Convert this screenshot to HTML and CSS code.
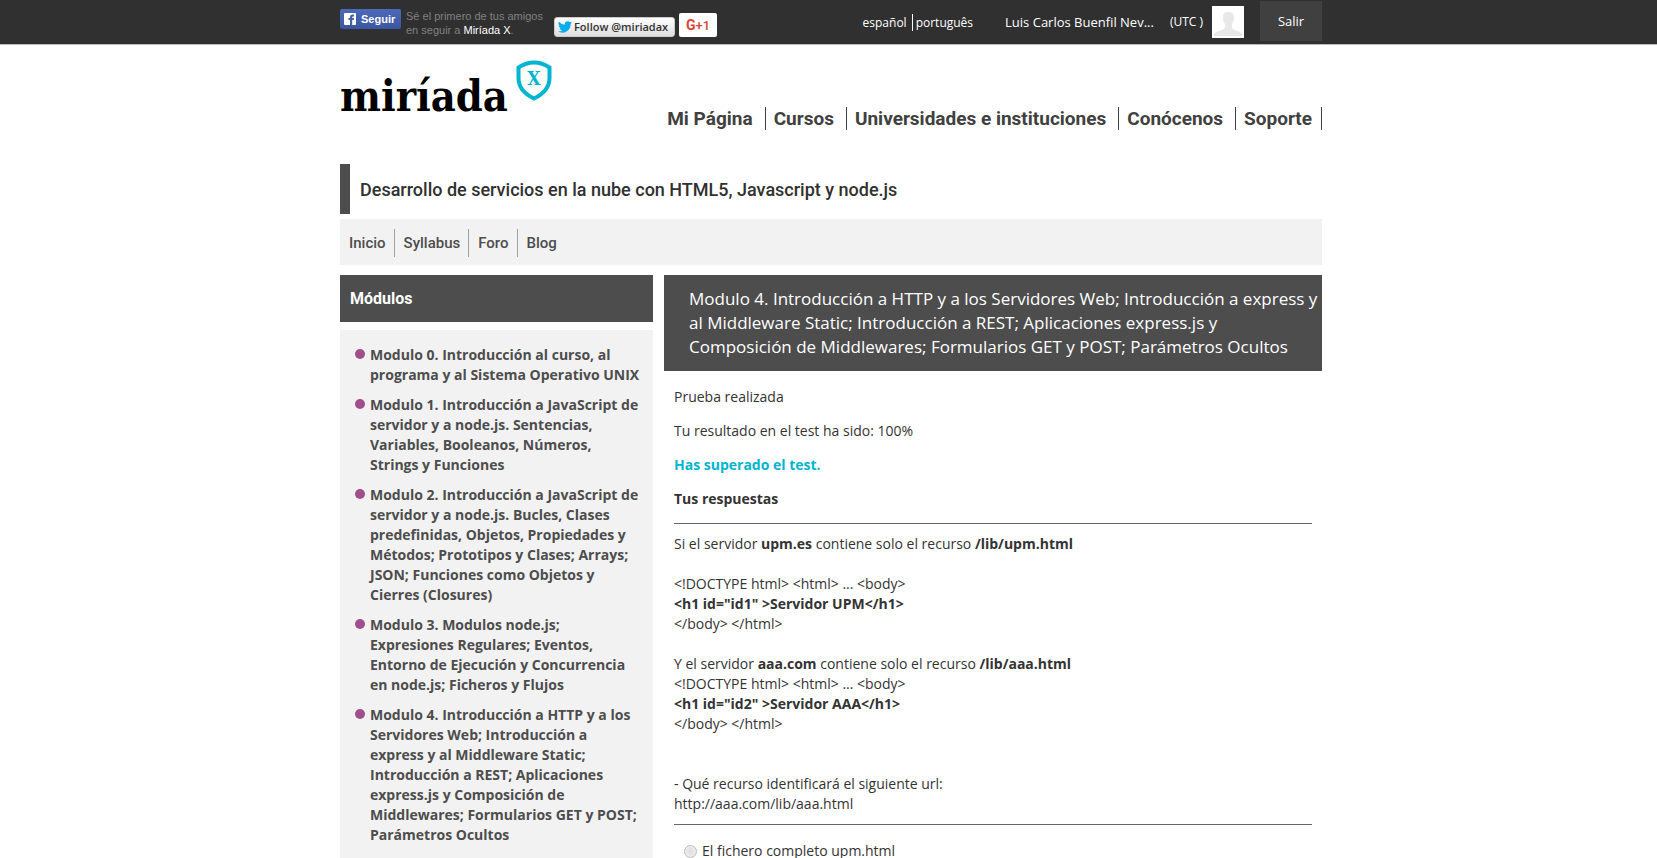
FILE: index.html
```html
<!DOCTYPE html>
<html lang="es">
<head>
<meta charset="utf-8">
<title>Miríada X</title>
<link rel="stylesheet" href="styles.css">
</head>
<body>
<div class="topbar">
  <div class="wrap topbar-inner">
    <div class="fb">
      <button class="fb-button" type="button">
        <svg class="fb-icon" viewBox="0 0 12 12" aria-hidden="true"><rect width="12" height="12" rx="1" fill="#fff"/><path d="M6 12V7H4.500V5H6V4Q6 1.500 8.500 1.500H10V3.500H9Q8.200 3.500 8.200 4.300V5H10L9.700 7H8.200V12Z" fill="#4560ad"/></svg>
        Seguir
      </button>
      <p class="fb-text">Sé el primero de tus amigos<br>en seguir a <a href="#">Miríada X</a>.</p>
    </div>
    <button class="tw-button" type="button">
      <svg class="tw-icon" viewBox="0 0 24 20" aria-hidden="true"><path d="M24 2.400a10 10 0 0 1-2.800.8A5 5 0 0 0 23.300.5a10 10 0 0 1-3.100 1.200 4.900 4.900 0 0 0-8.400 4.500A14 14 0 0 1 1.700 1a4.900 4.900 0 0 0 1.500 6.600 5 5 0 0 1-2.200-.6 4.900 4.900 0 0 0 3.900 4.900 5 5 0 0 1-2.200.1 4.900 4.900 0 0 0 4.600 3.400A9.900 9.900 0 0 1 0 17.400 14 14 0 0 0 21.500 5 10 10 0 0 0 24 2.400Z" fill="#00aced"/></svg>
      Follow @miriadax
    </button>
    <button class="gp-button" type="button"><span class="gp-g">G</span>+1</button>
    <nav class="langs" aria-label="Idioma">
      <a href="#">español</a>
      <a href="#">português</a>
    </nav>
    <a class="user" href="#">Luis Carlos Buenfil Nev...</a>
    <span class="utc">(UTC )</span>
    <svg class="avatar" viewBox="0 0 32 32" aria-hidden="true"><rect width="32" height="32" fill="#fff"/><path d="M2 30V28Q3 26 10 24Q13 23 13 21V18Q11 16 11 11Q11 6 16 6Q22 6 22 11Q22 16 20 18V21Q20 23 23 24Q29 26 30 28V30Z" fill="#e8e8e8"/></svg>
    <a class="logout" href="#">Salir</a>
  </div>
</div>

<header class="wrap header">
  <a class="logo" href="#">
    <span class="logo-text">miríada</span>
    <svg class="shield" viewBox="0 0 36 42" aria-hidden="true"><path d="M2.500 7.500Q10 2.500 18 2.500Q26 2.500 33.500 7.500V18Q33.500 31 18 38.500Q2.500 31 2.500 18Z" fill="none" stroke="#00b5d0" stroke-width="4"/><text x="18" y="25" text-anchor="middle" class="shield-x">X</text></svg>
  </a>
  <nav class="main-nav">
    <a href="#">Mi Página</a>
    <a href="#">Cursos</a>
    <a href="#">Universidades e instituciones</a>
    <a href="#">Conócenos</a>
    <a href="#">Soporte</a>
  </nav>
</header>

<main class="wrap">
  <h1 class="course-title">Desarrollo de servicios en la nube con HTML5, Javascript y node.js</h1>
  <nav class="course-nav">
    <a href="#">Inicio</a>
    <a href="#">Syllabus</a>
    <a href="#">Foro</a>
    <a href="#">Blog</a>
  </nav>
  <div class="columns">
    <aside class="sidebar">
      <h2 class="sidebar-title">Módulos</h2>
      <ul class="modules">
        <li><a href="#">Modulo 0. Introducción al curso, al programa y al Sistema Operativo UNIX</a></li>
        <li><a href="#">Modulo 1. Introducción a JavaScript de servidor y a node.js. Sentencias, Variables, Booleanos, Números, Strings y Funciones</a></li>
        <li><a href="#">Modulo 2. Introducción a JavaScript de servidor y a node.js. Bucles, Clases predefinidas, Objetos, Propiedades y Métodos; Prototipos y Clases; Arrays; JSON; Funciones como Objetos y Cierres (Closures)</a></li>
        <li><a href="#">Modulo 3. Modulos node.js; Expresiones Regulares; Eventos, Entorno de Ejecución y Concurrencia en node.js; Ficheros y Flujos</a></li>
        <li><a href="#">Modulo 4. Introducción a HTTP y a los Servidores Web; Introducción a express y al Middleware Static; Introducción a REST; Aplicaciones express.js y Composición de Middlewares; Formularios GET y POST; Parámetros Ocultos</a></li>
      </ul>
    </aside>
    <section class="content">
      <h2 class="content-title">Modulo 4. Introducción a HTTP y a los Servidores Web; Introducción a express y al Middleware Static; Introducción a REST; Aplicaciones express.js y Composición de Middlewares; Formularios GET y POST; Parámetros Ocultos</h2>
      <div class="result">
        <p>Prueba realizada</p>
        <p>Tu resultado en el test ha sido: 100%</p>
        <p class="passed">Has superado el test.</p>
        <p><strong>Tus respuestas</strong></p>
        <div class="question">
          Si el servidor <strong>upm.es</strong> contiene solo el recurso <strong>/lib/upm.html</strong><br><br>
          &lt;!DOCTYPE html&gt; &lt;html&gt; ... &lt;body&gt;<br>
          <strong>&lt;h1 id="id1" &gt;Servidor UPM&lt;/h1&gt;</strong><br>
          &lt;/body&gt; &lt;/html&gt;<br><br>
          Y el servidor <strong>aaa.com</strong> contiene solo el recurso <strong>/lib/aaa.html</strong><br>
          &lt;!DOCTYPE html&gt; &lt;html&gt; ... &lt;body&gt;<br>
          <strong>&lt;h1 id="id2" &gt;Servidor AAA&lt;/h1&gt;</strong><br>
          &lt;/body&gt; &lt;/html&gt;<br><br><br>
          - Qué recurso identificará el siguiente url:<br>
          http://aaa.com/lib/aaa.html
        </div>
        <div class="answer">
          <input type="radio" id="answer-1" name="answer" disabled>
          <label for="answer-1">El fichero completo upm.html</label>
        </div>
      </div>
    </section>
  </div>
</main>
</body>
</html>
```
FILE: styles.css
```css
* { box-sizing: border-box; }

body {
  margin: 0;
  background: #fff;
  color: #333;
  font: 14px/20px "Open Sans", "Noto Sans", sans-serif;
}

a { color: inherit; text-decoration: none; }
h1, h2, p, ul { margin: 0; padding: 0; }
button { margin: 0; cursor: pointer; }

.wrap {
  max-width: 987px;
  margin: 0 auto;
  padding-left: 5px;
}

/* Top bar */
.topbar {
  background: #303030;
  border-bottom: 1px solid #bbb;
  color: #fff;
}
.topbar-inner {
  display: flex;
  align-items: flex-start;
  height: 44px;
  font-size: 13px;
}
.fb { display: flex; gap: 5px; padding-top: 9px; width: 214px; }
.fb-button {
  display: flex;
  align-items: center;
  gap: 5px;
  width: 61px;
  height: 20px;
  padding: 0 4px;
  border: 0;
  border-radius: 2px;
  background: linear-gradient(#4c69ba, #3b55a0);
  color: #fff;
  font: bold 11px/18px "Liberation Sans", Arial, sans-serif;
}
.fb-icon { width: 12px; height: 12px; flex: none; }
.fb-text {
  color: #808080;
  font: 11px/14px "Liberation Sans", Arial, sans-serif;
  white-space: nowrap;
}
.fb-text a { color: #fff; }
.tw-button {
  display: flex;
  align-items: center;
  gap: 2px;
  width: 121px;
  height: 20px;
  margin-top: 17px;
  padding: 0 3px;
  border: 1px solid #ccc;
  border-radius: 3px;
  background: linear-gradient(#fff, #dedede);
  color: #333;
  font: 600 11px/18px "Open Sans", sans-serif;
  white-space: nowrap;
}
.tw-icon { width: 14px; height: 12px; flex: none; }
.gp-button {
  width: 38px;
  height: 24px;
  margin: 13px 0 0 4px;
  padding: 0;
  border: 0;
  border-radius: 2px;
  background: #fff;
  color: #dc4437;
  font: 500 13px/24px Roboto, sans-serif;
}
.gp-g { font-weight: 700; font-size: 14px; }
.langs {
  display: flex;
  margin: 14px 0 0 auto;
  font-size: 12px;
  line-height: 17px;
}
.langs a + a { margin-left: 5px; padding-left: 3px; border-left: 1px solid #fff; }
.user { margin: 12px 0 0 32px; }
.utc { margin: 12px 0 0 16px; font-size: 12px; }
.avatar { width: 32px; height: 32px; margin: 6px 0 0 9px; }
.logout {
  width: 62px;
  height: 40px;
  margin: 1px 0 0 16px;
  background: #404040;
  line-height: 40px;
  text-align: center;
}

/* Header */
.header {
  display: flex;
  justify-content: space-between;
  align-items: flex-start;
  height: 119px;
}
.logo { display: flex; padding-top: 15px; gap: 8px; }
.logo-text {
  padding-top: 8px;
  color: #000;
  font: bold 43px/56px "DejaVu Serif Condensed", "DejaVu Serif", serif;
}
.shield { width: 36px; height: 42px; }
.shield-x {
  font: bold 19px "DejaVu Serif Condensed", "DejaVu Serif", serif;
  fill: #00b5d0;
}
.main-nav {
  display: flex;
  gap: 8px;
  margin-top: 62px;
  color: #404040;
  font: bold 19px/23px Roboto, sans-serif;
}
.main-nav a { padding-right: 12px; border-right: 1px solid #404040; }
.main-nav a:last-child { padding-right: 9px; }

/* Course heading */
.course-title {
  border-left: 10px solid #4d4d4d;
  padding: 2px 0 0 10px;
  font: 500 18px/48px Roboto, sans-serif;
  color: #303030;
}
.course-nav {
  display: flex;
  margin-top: 5px;
  padding: 10px 0 8px;
  background: #f2f2f2;
  color: #4d4d4d;
  font: 500 15px/28px Roboto, sans-serif;
}
.course-nav a { padding: 0 8px 0 9px; }
.course-nav a + a { border-left: 1px solid #a0a0a0; }

.columns {
  display: grid;
  grid-template-columns: 313px 1fr;
  gap: 11px;
  margin-top: 10px;
}

/* Modules */
.sidebar { display: flex; flex-direction: column; gap: 8px; }
.sidebar-title {
  padding-left: 10px;
  background: #4d4d4d;
  color: #fff;
  font: bold 16px/47px Roboto, sans-serif;
}
.modules {
  flex: 1;
  display: flex;
  flex-direction: column;
  gap: 10px;
  padding: 15px 12px 15px 15px;
  background: #f2f2f2;
  list-style: none;
  color: #4d4d4d;
  font-weight: bold;
}
.modules li { display: flex; gap: 5px; }
.modules li::before {
  content: "";
  flex: none;
  width: 10px;
  height: 10px;
  margin-top: 4px;
  border-radius: 50%;
  background: #a04f8c;
}

/* Content */
.content-title {
  padding: 12px 0 12px 25px;
  background: #4d4d4d;
  color: #fff;
  font: 17px/24px "Open Sans", sans-serif;
}
.result {
  display: flex;
  flex-direction: column;
  gap: 14px;
  padding: 16px 10px;
}
.passed { color: #00b5d0; font-weight: bold; }
.question {
  padding: 10px 0;
  border: solid #666;
  border-width: 1px 0;
}
.answer { display: flex; align-items: center; gap: 5px; padding: 2px 0 0 10px; }
.answer input {
  appearance: none;
  width: 13px;
  height: 13px;
  margin: 0;
  border: 1px solid #bbb;
  border-radius: 50%;
  background: radial-gradient(#ddd, #f4f4f4);
}
```
